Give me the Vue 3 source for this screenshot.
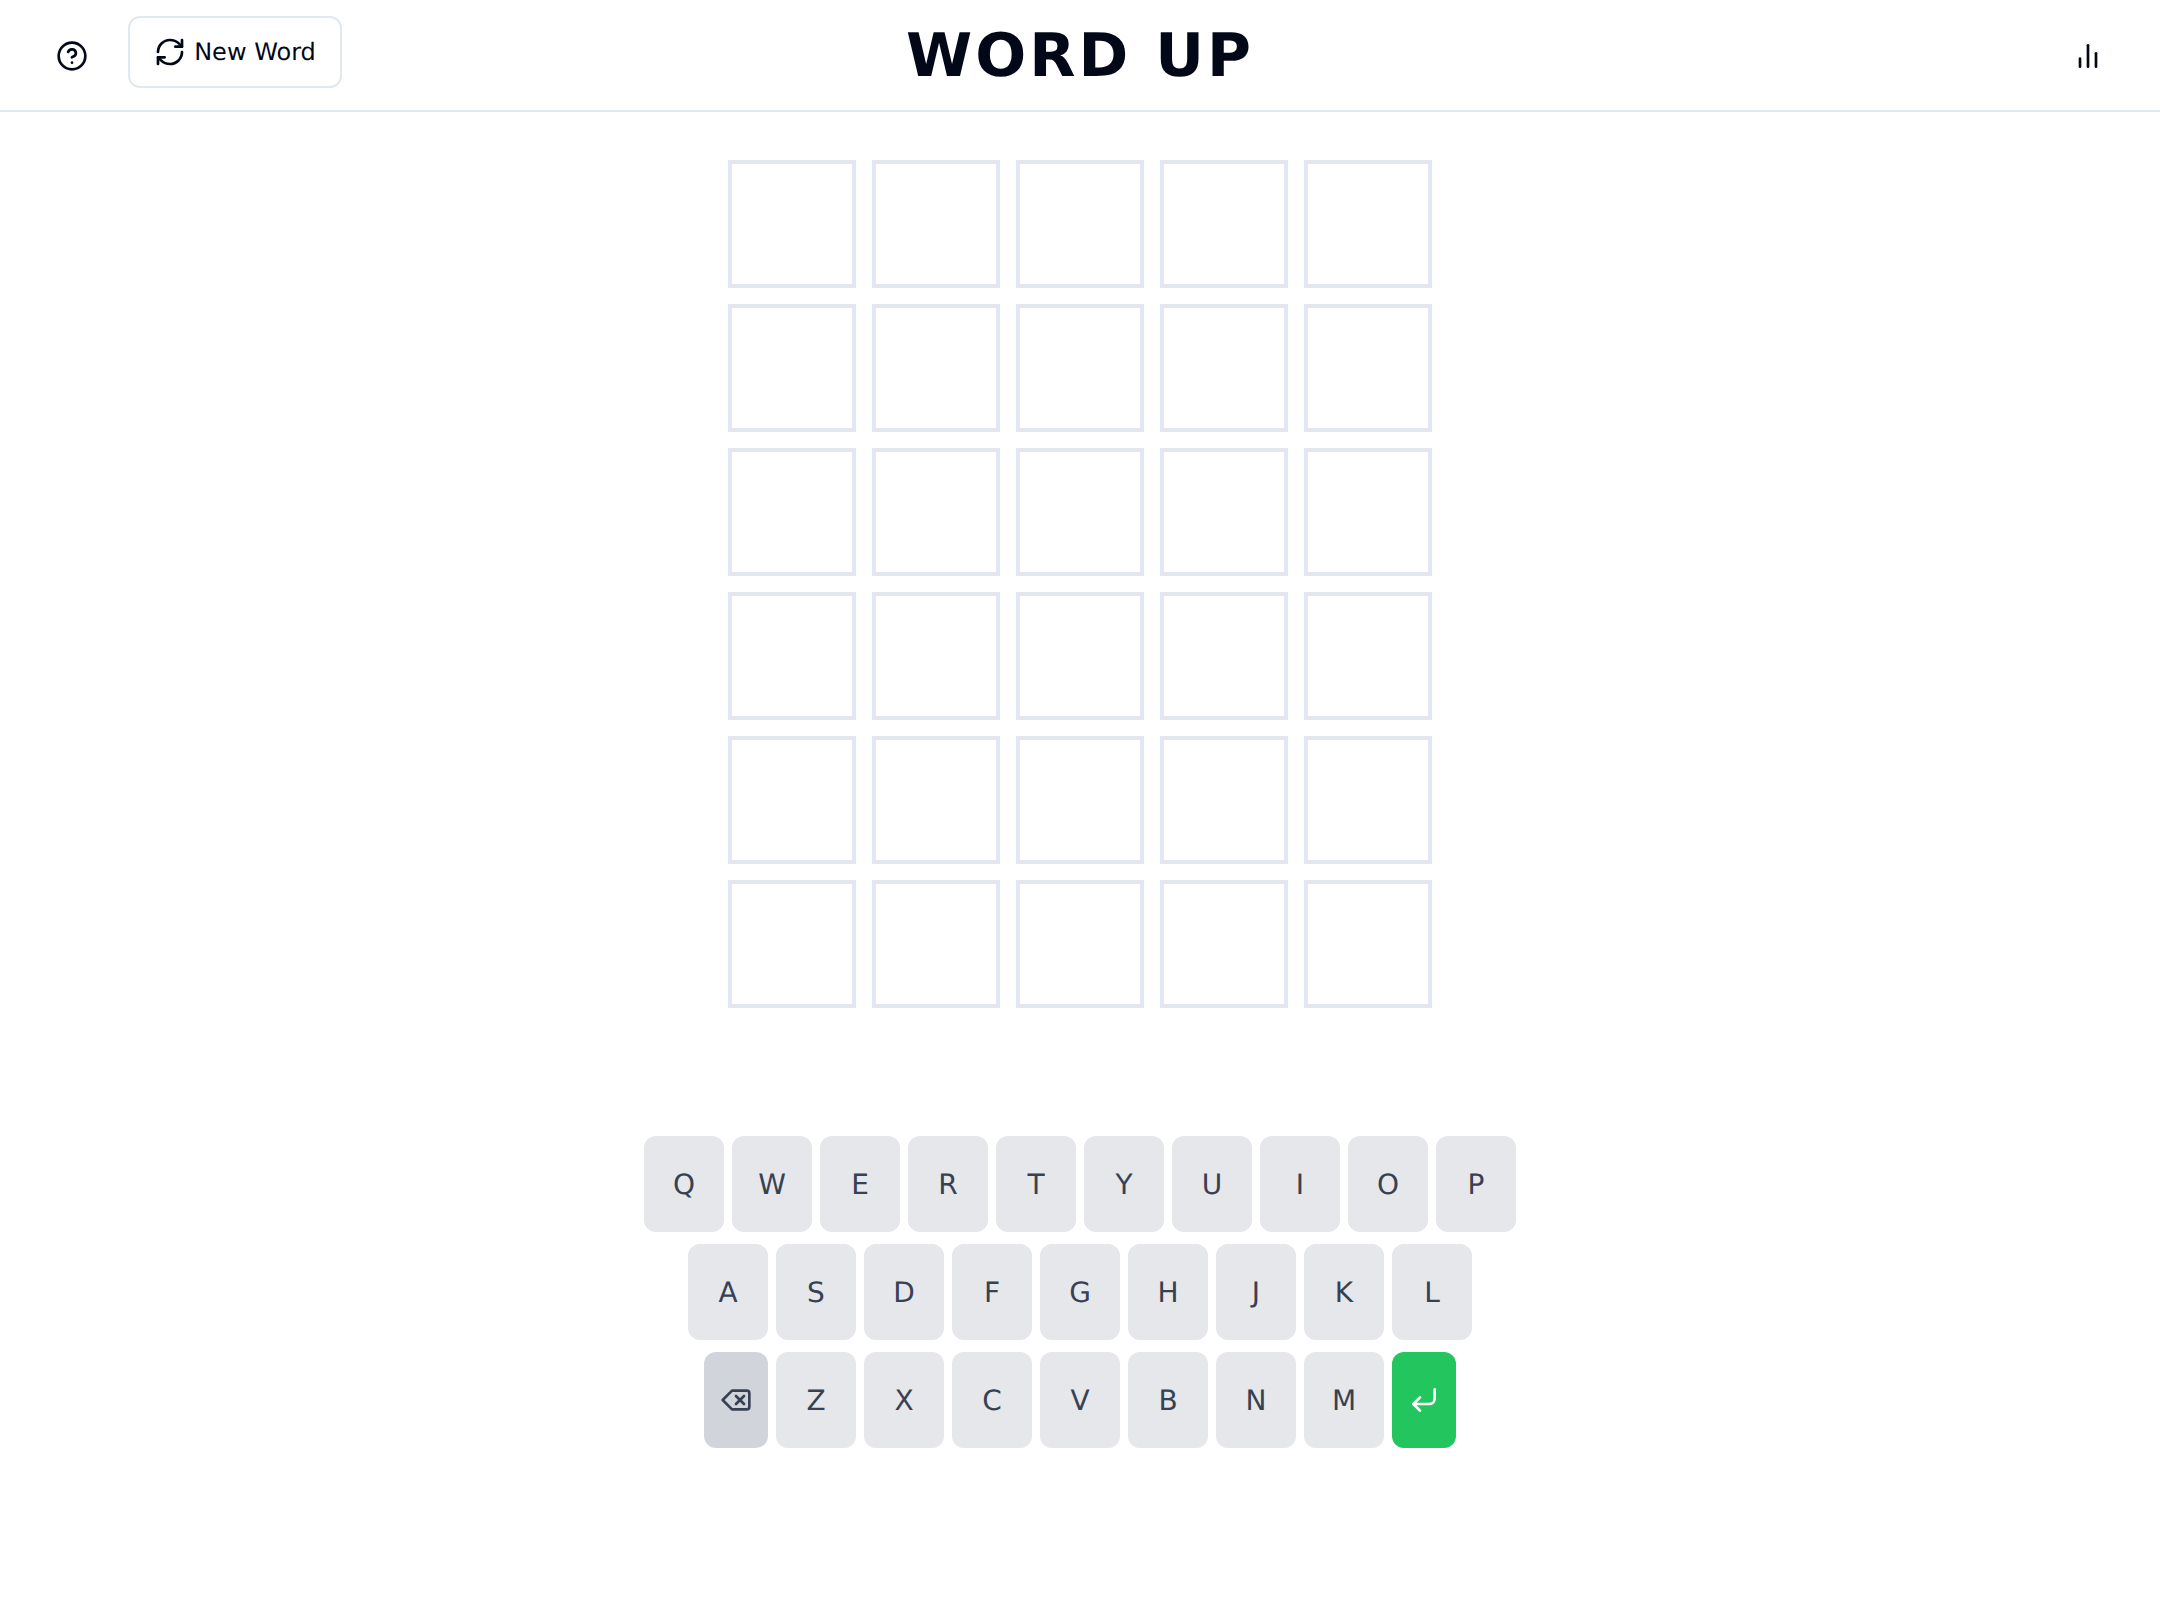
<script setup>
const rows = 6
const columns = 5
const keyRows = [[...'QWERTYUIOP'], [...'ASDFGHJKL'], ['del', ...'ZXCVBNM', 'enter']]
</script>

<template>
  <div class="app">
    <header class="header">
      <div class="side">
        <button class="plain" aria-label="Help">
          <svg class="icon" viewBox="0 0 24 24">
            <circle cx="12" cy="12" r="10" />
            <path d="M9.09 9a3 3 0 0 1 5.83 1c0 2-3 3-3 3" />
            <path d="M12 17h.01" />
          </svg>
        </button>
        <button class="new-word">
          <svg class="icon" viewBox="0 0 24 24">
            <path d="M3 12a9 9 0 0 1 9-9 9.75 9.75 0 0 1 6.74 2.74L21 8" />
            <path d="M21 3v5h-5" />
            <path d="M21 12a9 9 0 0 1-9 9 9.75 9.75 0 0 1-6.74-2.74L3 16" />
            <path d="M8 16H3v5" />
          </svg>
          <span>New Word</span>
        </button>
      </div>
      <h1 class="title">WORD UP</h1>
      <div class="side end">
        <button class="plain" aria-label="Statistics">
          <svg class="icon" viewBox="0 0 24 24">
            <path d="M18 20V10" />
            <path d="M12 20V4" />
            <path d="M6 20v-6" />
          </svg>
        </button>
      </div>
    </header>

    <main class="board">
      <div v-for="r in rows" :key="r" class="board-row">
        <div v-for="c in columns" :key="c" class="tile"></div>
      </div>
    </main>

    <section class="keyboard">
      <div v-for="(row, i) in keyRows" :key="i" class="key-row">
        <button v-for="key in row" :key="key" class="key" :class="key.length > 1 ? key : ''">
          <svg v-if="key === 'del'" class="icon" viewBox="0 0 24 24">
            <path d="M20 5H9l-7 7 7 7h11a2 2 0 0 0 2-2V7a2 2 0 0 0-2-2Z" />
            <path d="m18 9-6 6" />
            <path d="m12 9 6 6" />
          </svg>
          <svg v-else-if="key === 'enter'" class="icon" viewBox="0 0 24 24">
            <path d="m9 10-5 5 5 5" />
            <path d="M20 4v7a4 4 0 0 1-4 4H4" />
          </svg>
          <span v-else class="letter">{{ key }}</span>
        </button>
      </div>
    </section>
  </div>
</template>

<style>
body {
  margin: 0;
  background: #fff;
}
</style>

<style scoped>
.app {
  box-sizing: border-box;
  min-height: 1620px;
  display: flex;
  flex-direction: column;
  color: #020817;
  font-family: "DejaVu Sans", sans-serif;
  text-rendering: geometricPrecision;
}

.header {
  box-sizing: border-box;
  height: 112px;
  padding: 0 56px;
  border-bottom: 2px solid #e2e8f0;
  display: grid;
  grid-template-columns: 1fr auto 1fr;
  align-items: start;
}

.side {
  display: flex;
  align-items: flex-start;
  gap: 40px;
  padding-top: 16px;
}

.end {
  justify-content: flex-end;
}

button {
  font: inherit;
  color: inherit;
  text-rendering: inherit;
  border: 0;
  margin: 0;
  padding: 0;
  background: none;
  display: flex;
  align-items: center;
  justify-content: center;
}

.plain {
  height: 80px;
}

.new-word {
  box-sizing: border-box;
  width: 214px;
  height: 72px;
  gap: 8px;
  border: 2px solid #e2e8f0;
  border-radius: 12px;
  background: #fff;
  font-size: 24px;
  line-height: 32px;
  white-space: nowrap;
}

.letter {
  padding-top: 2px;
}

.icon {
  display: block;
  flex: none;
  width: 32px;
  height: 32px;
  fill: none;
  stroke: currentColor;
  stroke-width: 2;
  stroke-linecap: round;
  stroke-linejoin: round;
}

.title {
  margin: 20px 0 0;
  font-size: 60px;
  line-height: 72px;
  font-weight: 700;
  letter-spacing: 3px;
}

.board {
  display: flex;
  flex-direction: column;
  align-items: center;
  gap: 16px;
  padding-top: 48px;
}

.board-row {
  display: flex;
  gap: 16px;
}

.tile {
  box-sizing: border-box;
  width: 128px;
  height: 128px;
  border: 4px solid #e2e8f0;
}

.keyboard {
  display: flex;
  flex-direction: column;
  gap: 12px;
  padding-top: 128px;
}

.key-row {
  display: flex;
  justify-content: center;
  gap: 8px;
}

.key {
  width: 80px;
  height: 96px;
  border-radius: 12px;
  background: #e5e7eb;
  color: #374151;
  font-size: 28px;
  line-height: 40px;
}

.del {
  width: 64px;
  background: #d1d5db;
}

.enter {
  width: 64px;
  background: #22c55e;
  color: #fff;
}
</style>
